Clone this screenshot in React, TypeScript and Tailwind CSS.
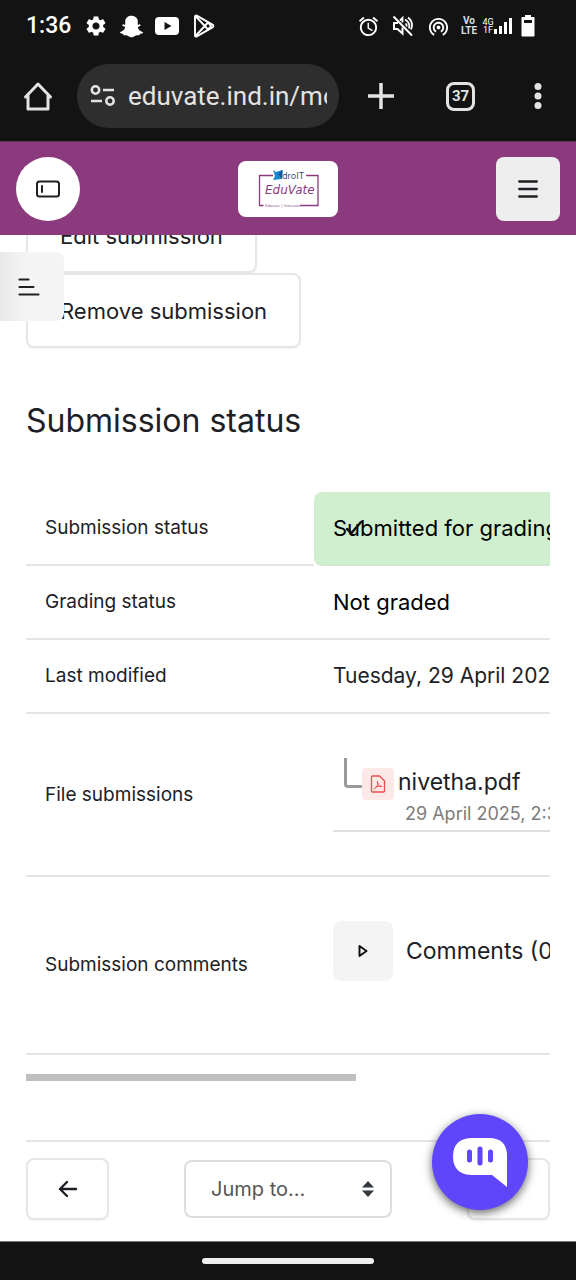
import React from "react";
import { MdAlarm, MdSettings, MdWifiTethering } from "react-icons/md";
import { FaSnapchatGhost } from "react-icons/fa";

function StatusBar() {
  return (
    <div className="flex h-[52px] items-center justify-between bg-[#131313] pr-[41px] pl-[26px] text-white">
      <div className="flex items-center">
        <span className="w-[58px] font-[Roboto] text-[23px] leading-7 font-medium">1:36</span>
        <MdSettings className="size-6" />
        <FaSnapchatGhost className="ml-3 size-[23px]" />
        <svg viewBox="0 0 24 18" className="ml-3 h-[18px] w-6">
          <rect width="24" height="18" rx="4" fill="#fff" />
          <path d="M9.5 5v8l7-4z" fill="#131313" />
        </svg>
        <svg viewBox="0 0 22 24" className="ml-[14px] h-6 w-[22px]" fill="none" stroke="#fff" strokeWidth="1.9" strokeLinejoin="round">
          <path d="M2 2.5c0-1 1-1.4 1.8-.9l16 9.3c.8.5.8 1.7 0 2.2l-16 9.3c-.8.5-1.8.1-1.8-.9z" />
          <path d="M2.5 2 15 15.500 18 12 15 8.500 2.500 22" />
        </svg>
      </div>
      <div className="flex items-center">
        <MdAlarm className="size-[23px]" />
        <svg viewBox="0 0 22 22" className="ml-[12px] size-[22px]" fill="none" stroke="#fff" strokeWidth="2">
          <path d="M1.500 1.500 20 20.500" />
          <path d="M6 8H2v6h3.500l5 4.500v-6" />
          <path d="M8 5.500 10.500 3v4.500M13.500 8.500q1.500 1 1 3M13 4.500q5.500 3 4 9M16 2.500q6 5 3 12" strokeWidth="1.800" />
        </svg>
        <MdWifiTethering className="ml-[13px] size-[23px]" />
        <div className="ml-[11px] flex w-4 flex-col items-center font-[Roboto] text-[10px] leading-[10px] font-bold text-[#dddddd]">
          <span>Vo</span>
          <span>LTE</span>
        </div>
        <div className="ml-[5px] flex w-3 flex-col items-center font-[Roboto] text-[9px] leading-[8px]">
          <span>4G</span>
          <span>1F</span>
        </div>
        <svg viewBox="0 0 18 18" className="h-[18px] w-[18px]" fill="#fff">
          <path d="M0 12h3v5H0zM5 9h3v8H5zM10 5h3v12h-3zM15 1h3v16h-3z" />
        </svg>
        <svg viewBox="0 0 14 22" className="ml-[9px] h-[22px] w-[14px]" fill="#fff">
          <path d="M4 0h6v2h2.500q1 0 1 1v17.500q0 1-1 1h-11q-1 0-1-1V3q0-1 1-1H4z" />
          <path d="M3 5h8v3H3z" fill="#131313" />
        </svg>
      </div>
    </div>
  );
}

function BrowserBar() {
  return (
    <div className="flex h-[89px] items-center bg-[#131313] pr-6 pb-px pl-[22px] text-[#e3e3e3]">
      <button type="button" aria-label="Home" className="flex size-8 items-center justify-center">
        <svg viewBox="0 0 32 32" className="size-8" fill="none" stroke="currentColor" strokeWidth="3" strokeLinejoin="round" strokeLinecap="round">
          <path d="M3.500 17 16 4l12.500 13M6 15v14h20V15" />
        </svg>
      </button>
      <div className="ml-[23px] flex h-16 min-w-0 flex-1 items-center rounded-full bg-[#2e2e2e] pr-3 pl-[13px]">
        <svg viewBox="0 0 26 22" className="h-[22px] w-[26px] shrink-0" fill="none" stroke="currentColor" strokeWidth="2.500">
          <circle cx="5.500" cy="5" r="3.700" />
          <path d="M13 5h11M1 16h11" />
          <circle cx="20" cy="16" r="3.700" />
        </svg>
        <input
          aria-label="Address"
          readOnly
          value="eduvate.ind.in/mod/assign"
          className="ml-3 w-0 min-w-0 flex-1 bg-transparent font-[Roboto] text-[26px] leading-8 outline-none"
        />
      </div>
      <button type="button" aria-label="New tab" className="ml-7 flex size-7 items-center justify-center">
        <svg viewBox="0 0 28 28" className="size-7" stroke="currentColor" strokeWidth="3.500">
          <path d="M14 1v26M1 14h26" />
        </svg>
      </button>
      <button type="button" aria-label="Tabs" className="ml-[51px] flex size-[29px] items-center justify-center rounded-lg border-[3px] border-current font-[Roboto] text-[15px] leading-4 font-bold">
        37
      </button>
      <button type="button" aria-label="More" className="ml-12 flex size-[29px] items-center justify-center">
        <svg viewBox="0 0 8 28" className="h-7 w-2" fill="currentColor">
          <circle cx="4" cy="4.500" r="3.500" />
          <circle cx="4" cy="14" r="3.500" />
          <circle cx="4" cy="23.500" r="3.500" />
        </svg>
      </button>
    </div>
  );
}

function Logo() {
  return (
    <a href="#home" aria-label="EduVate" className="flex h-14 w-[100px] items-center justify-center rounded-lg bg-white">
      <svg viewBox="0 0 100 56" className="h-14 w-[100px]">
        <path d="M35 14.500H21.500v30h4M68 14.500h12v30H62" fill="none" stroke="#8b3a7e" strokeWidth="1.300" />
        <path d="m35 9 3 2 3-1 4-1-1 9-9 1 2-4z" fill="#168bd2" />
        <path d="m40 13 4-4v9z" fill="#17549b" />
        <text x="44" y="18" fontFamily="Inter, sans-serif" fontSize="9" fill="#40517b">droIT</text>
        <text x="27" y="33" fontFamily="DejaVu Sans, sans-serif" fontSize="12" fontStyle="italic" fill="#8b3a7e">EduVate</text>
        <text x="27" y="46" fontFamily="Open Sans, sans-serif" fontSize="4" fill="#8b3a7e">Educate | Innovate</text>
      </svg>
    </a>
  );
}

function SiteHeader() {
  return (
    <header className="flex h-[94px] items-center justify-between border-t border-[#5f3858] bg-[#8b3a7e] px-4">
      <button type="button" aria-label="Toggle panel" className="flex size-16 items-center justify-center rounded-full bg-white">
        <svg viewBox="0 0 24 18" className="h-[18px] w-6" fill="none" stroke="#1d2125" strokeWidth="2">
          <rect x="1" y="1.500" width="22" height="15" rx="2.500" />
          <path d="M6 6v6" strokeLinecap="round" />
        </svg>
      </button>
      <Logo />
      <button type="button" aria-label="Menu" className="flex size-16 items-center justify-center rounded-lg bg-[#eeeeee]">
        <svg viewBox="0 0 20 18" className="h-[18px] w-5" stroke="#1d2125" strokeWidth="2.300" strokeLinecap="round">
          <path d="M1.200 1.500h17.600M1.200 9h17.600M1.200 16.500h17.600" />
        </svg>
      </button>
    </header>
  );
}

const buttonClass =
  "h-[75px] rounded-lg border-2 border-[#e6e6e6] bg-white px-8 text-[22px] leading-8 text-[#1d2125] shadow-xs";

function Row({ label, tall, children }: { label: string; tall?: string; children: React.ReactNode }) {
  return (
    <tr className={tall ?? "h-[74px]"}>
      <th scope="row" className="w-72 border-b-2 border-[#e4e4e4] px-[19px] text-left text-[19px] leading-7 font-normal">
        {label}
      </th>
      {children}
    </tr>
  );
}

const cellClass = "border-b-2 border-[#e4e4e4] pl-[19px] leading-8 whitespace-nowrap";

function SubmissionTable() {
  return (
    <div className="overflow-hidden">
      <table className="w-[834px] table-fixed border-separate border-spacing-0">
        <tbody>
          <Row label="Submission status">
            <td className="rounded-l-lg border-b-2 border-[#d3e9d3] bg-[#cfefcf] pl-[19px] text-[22px] leading-8 whitespace-nowrap text-black">
              <div className="relative">
                Submitted for grading
                <svg viewBox="0 0 18 16" className="absolute top-2 left-3 h-4 w-[18px]" fill="none" stroke="#111" strokeWidth="2.500" strokeLinecap="round">
                  <path d="m2 9 4.500 4L16 2" />
                </svg>
              </div>
            </td>
          </Row>
          <Row label="Grading status">
            <td className={`${cellClass} text-[22px] text-black`}>Not graded</td>
          </Row>
          <Row label="Last modified">
            <td className={`${cellClass} text-[21px]`}>Tuesday, 29 April 2025, 2:34 PM</td>
          </Row>
          <Row label="File submissions" tall="h-[163px]">
            <td className={`${cellClass} text-[23px]`}>
              <div className="flex items-start border-b-2 border-[#e0e0e0] pl-[11px]">
                <span className="h-[30px] w-[18px] shrink-0 rounded-bl-sm border-b-[3px] border-l-[3px] border-[#9a9a9a]" />
                <span className="mt-[10px] flex size-8 shrink-0 items-center justify-center rounded-sm bg-[#fde8e8]">
                  <svg viewBox="0 0 16 18" className="h-[18px] w-4" fill="none" stroke="#ee4b50" strokeWidth="1.300" strokeLinejoin="round" strokeLinecap="round">
                    <path d="M1.500 2q0-1 1-1h7L14.500 6v10q0 1-1 1h-11q-1 0-1-1z" />
                    <path d="M7.500 6.500c-.5 2 1.500 4.700 4.300 5M8 8c.2 2.500-2.100 5.200-3.900 6M5.800 11.800q3-1 6-.3" strokeWidth="1" />
                  </svg>
                </span>
                <div className="mt-2 pl-1">
                  <a href="#file" className="block leading-8">nivetha.pdf</a>
                  <div className="pl-[7px] text-[18px] leading-8 text-[#7c7c7c]">29 April 2025, 2:34 PM</div>
                </div>
              </div>
            </td>
          </Row>
          <Row label="Submission comments" tall="h-[178px]">
            <td className={`${cellClass} text-[23px]`}>
              <div className="flex items-center gap-[13px] pb-7">
                <button type="button" aria-label="Show comments" className="flex size-[60px] items-center justify-center rounded-lg bg-[#f4f4f4]">
                  <svg viewBox="0 0 10 14" className="h-[14px] w-[10px]" fill="none" stroke="#111" strokeWidth="2" strokeLinejoin="round">
                    <path d="M1.500 2 8.500 7l-7 5z" />
                  </svg>
                </button>
                Comments (0)
              </div>
            </td>
          </Row>
        </tbody>
      </table>
      <div className="mt-[19px] h-[7px] w-[63%] bg-[#bfbfbf]" />
    </div>
  );
}

function ActivityNav() {
  return (
    <nav className="mt-[59px] flex items-center justify-between border-t-2 border-[#e4e4e4] pt-4">
      <button type="button" aria-label="Previous activity" className="flex h-[62px] w-[83px] items-center justify-center rounded-lg border-2 border-[#e6e6e6] bg-white shadow-xs">
        <svg viewBox="0 0 20 18" className="h-[18px] w-5" fill="none" stroke="#1d2125" strokeWidth="2.400" strokeLinecap="round" strokeLinejoin="round">
          <path d="M18 9H2M9 2 2 9l7 7" />
        </svg>
      </button>
      <div className="relative w-52">
        <select aria-label="Jump to" className="h-[58px] w-full appearance-none rounded-lg border-2 border-[#dddddd] bg-white pl-[25px] text-[20px] text-[#555555]">
          <option>Jump to...</option>
        </select>
        <svg viewBox="0 0 12 16" className="pointer-events-none absolute top-[21px] right-[18px] h-4 w-3" fill="#343a40">
          <path d="M0 6.500h12L6 0zM0 9.500h12L6 16z" />
        </svg>
      </div>
      <button type="button" aria-label="Next activity" className="h-[62px] w-[83px] rounded-lg border-2 border-[#e6e6e6] bg-white shadow-xs" />
    </nav>
  );
}

export default function App() {
  return (
    <div className="relative flex min-h-screen flex-col bg-white font-[Inter,sans-serif] text-[#1d2125]">
      <StatusBar />
      <BrowserBar />
      <SiteHeader />
      <main className="relative flex-1 overflow-hidden px-[26px] pb-5">
        <div className="-mt-[37px] flex flex-col items-start">
          <button type="button" className={buttonClass}>Edit submission</button>
          <button type="button" className={buttonClass}>Remove submission</button>
        </div>
        <button type="button" aria-label="Open course index" className="absolute top-[17px] left-0 flex h-[69px] w-16 items-center rounded-r-lg bg-linear-to-r from-[#e8e8e8] to-[#f4f4f4] to-40% pl-[18px]">
          <svg viewBox="0 0 22 18" className="h-[18px] w-[22px]" stroke="#1d2125" strokeWidth="2.200" strokeLinecap="round">
            <path d="M1.500 1.500h9M1.500 9h14M1.500 16.500h19" />
          </svg>
        </button>
        <h2 className="mt-[53px] mb-[51px] text-[32px] leading-10 font-normal">Submission status</h2>
        <SubmissionTable />
        <ActivityNav />
        <button type="button" aria-label="Open chat" className="absolute right-12 bottom-[31px] flex size-24 items-center justify-center rounded-full bg-[#5f45fb] shadow-[0_3px_10px_rgba(0,0,0,0.6)]">
          <svg viewBox="0 0 56 50" className="h-[50px] w-14">
            <path d="M19 1h18q18 0 18 18v31L40 38H19Q1 37 1 19.500 1 2 19 1z" fill="#fff" />
            <path d="M17.500 15v8M28 12v14M38.500 15v8" stroke="#5f45fb" strokeWidth="5" strokeLinecap="round" />
          </svg>
        </button>
      </main>
      <footer className="flex h-[39px] items-center justify-center border-t border-[#777777] bg-[#131313]">
        <div className="h-[6px] w-[30%] rounded-full bg-[#eeeeee]" />
      </footer>
    </div>
  );
}
